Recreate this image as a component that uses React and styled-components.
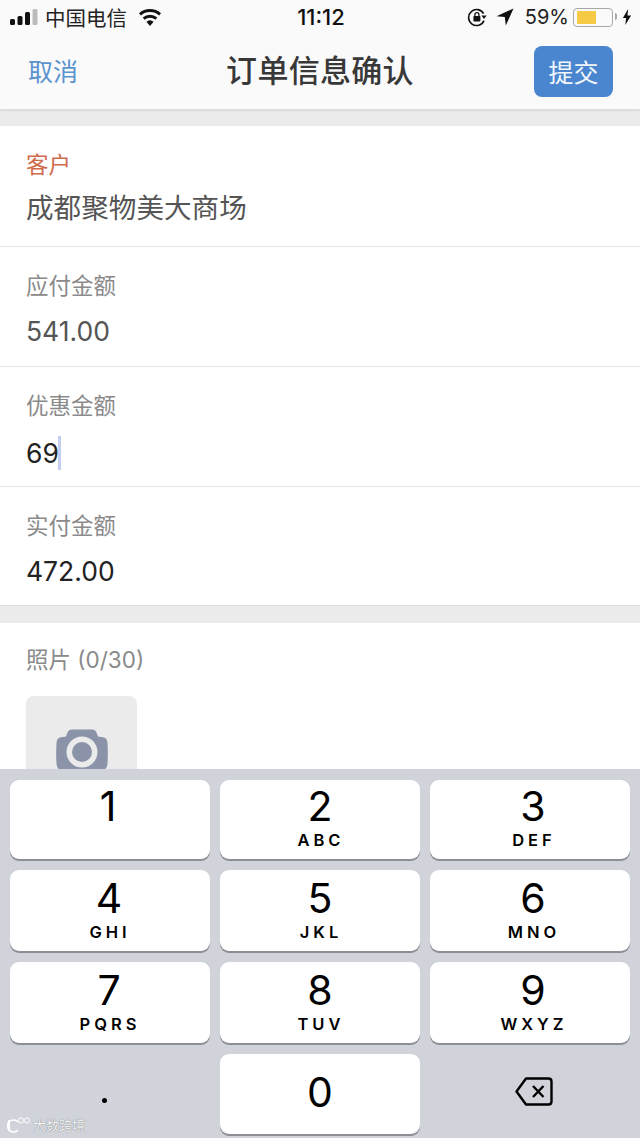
import React from "react";
import styled, { createGlobalStyle } from "styled-components";

const GlobalStyle = createGlobalStyle`
  html, body {
    margin: 0;
    padding: 0;
    background: #fff;
  }
  * {
    box-sizing: border-box;
  }
`;

const sans = `Inter, "Noto Sans CJK SC", sans-serif`;

const Screen = styled.div`
  position: relative;
  width: 640px;
  height: 1138px;
  display: flex;
  flex-direction: column;
  overflow: hidden;
  background: #ebebeb;
  font-family: ${sans};
`;

const Header = styled.header`
  flex: none;
  height: 110px;
  background: #fafafa;
  border-bottom: 1px solid #dcdcdc;
  box-shadow: 0 1px 2px rgba(0, 0, 0, 0.08);
`;

const StatusBar = styled.div`
  height: 35px;
  padding: 0 8px 1px 10px;
  display: grid;
  grid-template-columns: 1fr auto 1fr;
  align-items: center;
  color: #111;
`;

const StatusLeft = styled.div`
  display: flex;
  align-items: center;
`;

const StatusRight = styled.div`
  display: flex;
  align-items: center;
  justify-content: flex-end;
`;

const Carrier = styled.span`
  margin: 0 10px 0 7px;
  font-size: 20.5px;
  color: #222;
`;

const Clock = styled.span`
  font-size: 22px;
  font-weight: 500;
`;

const Percent = styled.span`
  margin: 0 4px 0 11px;
  font-size: 20px;
  color: #222;
`;

const Battery = styled.span`
  position: relative;
  width: 40px;
  height: 19px;
  padding: 2px 2.5px;
  border: 1.5px solid #a8a8a8;
  border-radius: 4px;
  margin-right: 9px;
  &::after {
    content: "";
    position: absolute;
    right: -5px;
    top: 4.5px;
    width: 2px;
    height: 7px;
    background: #a8a8a8;
    border-radius: 0 2px 2px 0;
  }
`;

const BatteryLevel = styled.span`
  display: block;
  height: 100%;
  background: #f7ca45;
  border-radius: 1px;
`;

const NavRow = styled.div`
  height: 73px;
  padding: 0 27px 0 28px;
  display: grid;
  grid-template-columns: 1fr auto 1fr;
  align-items: center;
`;

const CancelLink = styled.span`
  padding-bottom: 3px;
  font-size: 25px;
  color: #5b93cf;
`;

const Title = styled.h1`
  margin: 0 0 2px -1px;
  font-size: 31px;
  line-height: 40px;
  font-weight: 500;
  letter-spacing: 0.3px;
  color: #383838;
`;

const SubmitButton = styled.button`
  justify-self: end;
  width: 79px;
  height: 51px;
  padding: 0 0 2px;
  border: none;
  border-radius: 8px;
  background: #4a86d0;
  color: #f2f6fb;
  font-family: inherit;
  font-size: 25px;
`;

const Content = styled.main`
  flex: 1;
  min-height: 0;
  overflow: hidden;
  padding-top: 16px;
`;

const Section = styled.section`
  background: #fff;
  border-bottom: 1px solid #dedede;
  margin-bottom: 17px;
`;

const Field = styled.div`
  height: ${(p) => p.$height || 120}px;
  padding: 25px 26px 0;
  border-bottom: 1px solid #e6e6e6;
  &:last-child {
    border-bottom: none;
  }
`;

const Label = styled.div`
  font-size: 22.5px;
  line-height: 28px;
  color: ${(p) => (p.$accent ? "#cf6b4c" : "#8a8a8a")};
`;

const Value = styled.div`
  margin-top: ${(p) => (p.$large ? 14 : 16)}px;
  display: flex;
  align-items: center;
  font-size: ${(p) => (p.$large ? 27.6 : 26.5)}px;
  line-height: 30px;
  color: ${(p) => (p.$muted ? "#555" : "#222")};
`;

const Caret = styled.span`
  width: 3px;
  height: 34px;
  margin-left: -1px;
  background: #c3cef2;
`;

const PhotoSection = styled.section`
  height: 200px;
  padding: 23px 26px 0;
  background: #fff;
`;

const PhotoLabel = styled.div`
  font-size: 22.5px;
  line-height: 28px;
  color: #8a8a8a;
`;

const PhotoAdd = styled.div`
  width: 111px;
  height: 111px;
  margin-top: 22px;
  padding-top: 33px;
  display: flex;
  justify-content: center;
  background: #ebebeb;
  border-radius: 8px;
`;

const Keyboard = styled.div`
  flex: none;
  height: 369px;
  padding: 11px 10px 0;
  background: #d0d4da;
  display: grid;
  grid-template-columns: repeat(3, 200px);
  grid-template-rows: 79px 81px 81px 80px;
  column-gap: 10px;
  row-gap: 11px;
`;

const Key = styled.div`
  padding-top: ${(p) => p.$top}px;
  display: flex;
  flex-direction: column;
  align-items: center;
  background: #fff;
  border-radius: 9px;
  box-shadow: 0 2px 0 #8b8f95;
  color: #000;
`;

const BlankKey = styled.div`
  padding: ${(p) => p.$pad};
  display: flex;
  align-items: center;
  justify-content: center;
  color: #000;
`;

const Digit = styled.span`
  font-size: 41px;
  line-height: 46px;
  font-weight: 400;
  transform: translateX(${(p) => p.$nudge || 0}px);
`;

const Letters = styled.span`
  margin: 1px -4px 0 0;
  font-size: 16.5px;
  line-height: 20px;
  font-weight: 600;
  letter-spacing: 4px;
  transform: translateX(${(p) => p.$nudge || 0}px);
`;

const Dot = styled.span`
  width: 5px;
  height: 5px;
  border-radius: 50%;
  background: #000;
`;

const Watermark = styled.div`
  position: absolute;
  left: 7px;
  bottom: 5px;
  display: flex;
  align-items: center;
  gap: 2px;
  color: rgba(255, 255, 255, 0.95);
  font-size: 13px;
  line-height: 16px;
  text-shadow: 0 0 1px rgba(80, 85, 95, 1);
`;

// the columns on the system keypad don't sit quite on centre
const keys = [
  { digit: "1", letters: "", top: 3, nudge: -2 },
  { digit: "2", letters: "ABC", top: 3, nudge: 0 },
  { digit: "3", letters: "DEF", top: 3, nudge: 3 },
  { digit: "4", letters: "GHI", top: 5, nudge: -1 },
  { digit: "5", letters: "JKL", top: 5, nudge: 0 },
  { digit: "6", letters: "MNO", top: 5, nudge: 3 },
  { digit: "7", letters: "PQRS", top: 5, nudge: -1 },
  { digit: "8", letters: "TUV", top: 5, nudge: 0 },
  { digit: "9", letters: "WXYZ", top: 5, nudge: 3 },
];

function SignalBars() {
  return (
    <svg width="28" height="16" viewBox="0 0 28 16">
      <rect x="0" y="10" width="5" height="6" rx="1.5" fill="#111" />
      <rect x="7.5" y="7" width="5" height="9" rx="1.5" fill="#111" />
      <rect x="15" y="3" width="5" height="13" rx="1.5" fill="#111" />
      <rect x="22.5" y="0" width="5" height="16" rx="1.5" fill="#bbb" />
    </svg>
  );
}

function WifiIcon() {
  return (
    <svg width="26" height="18" viewBox="0 0 24 18">
      <path d="M12 18l-3.6-4.2a5.4 5.4 0 0 1 7.2 0z" fill="#111" />
      <path d="M6.6 11.7a8.2 8.2 0 0 1 10.8 0l1.9-2.2a11.1 11.1 0 0 0-14.6 0z" fill="#111" />
      <path d="M2.9 7.4a13.9 13.9 0 0 1 18.2 0L23 5.2A16.8 16.8 0 0 0 1 5.2z" fill="#111" />
    </svg>
  );
}

function RotationLockIcon() {
  return (
    <svg width="20" height="20" viewBox="0 0 20 20">
      <path d="M16.6 6.6A8 8 0 1 0 17 13.6" fill="none" stroke="#111" strokeWidth="1.6" />
      <path d="M14.4 8.6h5.2L17 12z" fill="#111" />
      <rect x="6.4" y="9" width="7" height="5.4" rx="0.8" fill="#111" />
      <path d="M7.9 9V7.6a2 2 0 0 1 4 0V9" fill="none" stroke="#111" strokeWidth="1.3" />
    </svg>
  );
}

function LocationArrow() {
  return (
    <svg width="18" height="18" viewBox="0 0 18 18" style={{ marginLeft: 9 }}>
      <path d="M17.5 0.5L0.5 8.2l8.3 0.9 1 8.4z" fill="#111" />
    </svg>
  );
}

function ChargeBolt() {
  return (
    <svg width="10" height="16" viewBox="0 0 9 16">
      <path d="M5.6 0L0.4 9h3.2L2.8 16 8.6 6.4H5z" fill="#111" />
    </svg>
  );
}

function CameraIcon() {
  return (
    <svg width="52" height="44" viewBox="0 0 52 44">
      <path
        d="M10 7.5l1.6-4.2C12.3 1.4 14 .4 16 .4h20c2 0 3.7 1 4.4 2.9L42 7.5l5 .7c2.4.4 4.2 2.3 4.4 4.7.6 7.4.6 15 0 22.6-.3 3.4-2.9 6-6.3 6.4-12.6 1.2-25.6 1.2-38.2 0-3.4-.4-6-3-6.3-6.4-.6-7.6-.6-15.2 0-22.6.2-2.4 2-4.3 4.4-4.7z"
        fill="#8a93a8"
      />
      <circle cx="26" cy="23" r="15.5" fill="#ebebeb" />
      <circle cx="26" cy="23" r="10" fill="#8a93a8" />
    </svg>
  );
}

function BackspaceIcon() {
  return (
    <svg width="38" height="29" viewBox="0 0 38 29">
      <path
        d="M11 1.5h22.5c1.7 0 3 1.3 3 3v20c0 1.7-1.3 3-3 3H11L1.5 14.5z"
        fill="none"
        stroke="#000"
        strokeWidth="2.4"
        strokeLinejoin="round"
      />
      <path d="M18 9l10.5 11M28.5 9L18 20" stroke="#000" strokeWidth="2.4" fill="none" />
    </svg>
  );
}

function WatermarkLogo() {
  return (
    <svg width="24" height="16" viewBox="0 0 24 16">
      <path d="M2 3v11" fill="none" stroke="#fff" strokeWidth="1.8" />
      <path d="M11 5a6 6 0 1 0 0 8" fill="none" stroke="#fff" strokeWidth="1.6" />
      <circle cx="14" cy="3.5" r="2.6" fill="none" stroke="#fff" strokeWidth="1" />
      <circle cx="20" cy="3.5" r="2.6" fill="none" stroke="#fff" strokeWidth="1" />
    </svg>
  );
}

export default function App() {
  return (
    <Screen>
      <GlobalStyle />
      <Header>
        <StatusBar>
          <StatusLeft>
            <SignalBars />
            <Carrier>中国电信</Carrier>
            <WifiIcon />
          </StatusLeft>
          <Clock>11:12</Clock>
          <StatusRight>
            <RotationLockIcon />
            <LocationArrow />
            <Percent>59%</Percent>
            <Battery>
              <BatteryLevel style={{ width: "59%" }} />
            </Battery>
            <ChargeBolt />
          </StatusRight>
        </StatusBar>
        <NavRow>
          <CancelLink>取消</CancelLink>
          <Title>订单信息确认</Title>
          <SubmitButton>提交</SubmitButton>
        </NavRow>
      </Header>

      <Content>
        <Section>
          <Field $height={121}>
            <Label $accent>客户</Label>
            <Value $large $muted>成都聚物美大商场</Value>
          </Field>
          <Field>
            <Label>应付金额</Label>
            <Value $muted>541.00</Value>
          </Field>
          <Field>
            <Label>优惠金额</Label>
            <Value>
              69
              <Caret />
            </Value>
          </Field>
          <Field $height={118}>
            <Label>实付金额</Label>
            <Value>472.00</Value>
          </Field>
        </Section>
        <PhotoSection>
          <PhotoLabel>照片 (0/30)</PhotoLabel>
          <PhotoAdd>
            <CameraIcon />
          </PhotoAdd>
        </PhotoSection>
      </Content>

      <Keyboard>
        {keys.map(({ digit, letters, top, nudge }) => (
          <Key key={digit} $top={top}>
            <Digit $nudge={nudge}>{digit}</Digit>
            {letters && <Letters $nudge={nudge - 1}>{letters}</Letters>}
          </Key>
        ))}
        <BlankKey $pad="12px 12px 0 0">
          <Dot />
        </BlankKey>
        <Key $top={15}>
          <Digit>0</Digit>
        </Key>
        <BlankKey $pad="0 0 5px 8px">
          <BackspaceIcon />
        </BlankKey>
      </Keyboard>

      <Watermark>
        <WatermarkLogo />
        大数跨境
      </Watermark>
    </Screen>
  );
}
